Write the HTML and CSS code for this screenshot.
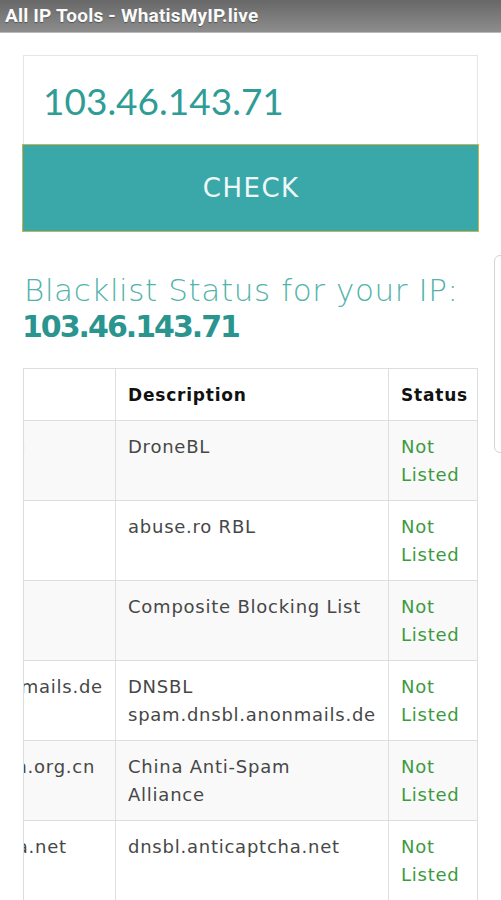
FILE: index.html
```html
<!DOCTYPE html>
<html lang="en">
<head>
<meta charset="utf-8">
<title>All IP Tools - WhatisMyIP.live</title>
<link rel="stylesheet" href="styles.css">
</head>
<body>
<header class="appbar">All IP Tools - WhatisMyIP.live</header>
<main class="content">
  <div class="ip-input">103.46.143.71</div>
  <button class="check-btn">CHECK</button>
  <h2 class="result-title"><span class="light">Blacklist Status for your IP:</span><br><span class="ip-bold">103.46.143.71</span></h2>
  <div class="table-wrap">
    <table class="bl-table">
      <colgroup><col class="c-host"><col class="c-desc"><col class="c-stat"></colgroup>
      <thead>
        <tr><th>Blacklist</th><th>Description</th><th>Status</th></tr>
      </thead>
      <tbody>
        <tr><td class="host">dnsbl.dronebl.org</td><td>DroneBL</td><td class="ok">Not Listed</td></tr>
        <tr><td class="host">rbl.abuse.ro</td><td>abuse.ro RBL</td><td class="ok">Not Listed</td></tr>
        <tr><td class="host">cbl.abuseat.org</td><td>Composite Blocking List</td><td class="ok">Not Listed</td></tr>
        <tr><td class="host">spam.dnsbl.anonmails.de</td><td>DNSBL spam.dnsbl.anonmails.de</td><td class="ok">Not Listed</td></tr>
        <tr><td class="host">cblplus.anti-spam.org.cn</td><td>China Anti-Spam Alliance</td><td class="ok">Not Listed</td></tr>
        <tr><td class="host">dnsbl.anticaptcha.net</td><td>dnsbl.anticaptcha.net</td><td class="ok">Not Listed</td></tr>
      </tbody>
    </table>
  </div>
</main>
<div class="edge-handle"></div>
</body>
</html>
```
FILE: styles.css
```css
html, body {
  margin: 0;
  padding: 0;
  background: #fff;
}
body {
  width: 501px;
  height: 900px;
  overflow: hidden;
  font-family: "DejaVu Sans", sans-serif;
}
.appbar {
  height: 32px;
  border-bottom: 1px solid #b9b9b9;
  background: linear-gradient(#676767, #8d8d8d);
  color: #fbfbfb;
  font-family: Roboto, "Liberation Sans", sans-serif;
  font-weight: 700;
  font-size: 19px;
  letter-spacing: 0.2px;
  line-height: 32px;
  padding-left: 5px;
  text-shadow: 0 1px 1px rgba(0,0,0,0.35);
}
.content {
  padding: 22px 23px 0;
}
.ip-input {
  height: 89px;
  border: 1px solid #e6e6e6;
  border-bottom: none;
  box-sizing: border-box;
  padding-left: 19px;
  font-family: Lato, sans-serif;
  font-size: 37px;
  line-height: 89px;
  color: #2f9c96;
}
.check-btn {
  display: block;
  width: calc(100% + 2px);
  margin: 0 -1px;
  height: 88px;
  background: #3aa8a8;
  border: 1px solid #c9b34a;
  color: #eef8f8;
  font-family: "DejaVu Sans", sans-serif;
  font-size: 26px;
  letter-spacing: 1.5px;
  text-indent: 1.5px;
  cursor: pointer;
}
.result-title {
  margin: 40px 0 0;
  font-size: 31px;
  line-height: 36px;
  font-weight: 200;
  letter-spacing: 0.6px;
  color: #52b3aa;
  margin-left: 1px;
}
.result-title .ip-bold {
  font-size: 30px;
  font-weight: 700;
  color: #2a958f;
  letter-spacing: -2px;
  margin-left: -2px;
}
.table-wrap {
  margin-top: 23px;
  border-left: 1px solid #dcdcdc;
  overflow: hidden;
  direction: rtl;
}
.bl-table {
  direction: ltr;
  border-collapse: collapse;
  table-layout: fixed;
  width: 635px;
  font-size: 18px;
  letter-spacing: 0.76px;
  color: #474747;
}
.c-host { width: 273px; }
.c-desc { width: 273px; }
.c-stat { width: 89px; }
.bl-table th,
.bl-table td {
  border: 1px solid #dedede;
  text-align: left;
  vertical-align: top;
  padding: 12px 20px 11px 12px;
  line-height: 28px;
}
.bl-table td.host {
  white-space: nowrap;
  overflow: hidden;
}
.bl-table td:last-child,
.bl-table th:last-child {
  padding-right: 4px;
}
.bl-table th {
  font-weight: 700;
  color: #111;
  font-size: 17px;
  letter-spacing: 0.8px;
}
.bl-table tbody tr:nth-child(odd) td {
  background: #f9f9f9;
}
.bl-table td.ok {
  color: #3d9b3d;
}
.edge-handle {
  position: absolute;
  left: 494px;
  top: 255px;
  width: 12px;
  height: 198px;
  border: 1px solid #d4d4d4;
  border-radius: 7px;
  box-sizing: border-box;
}
```
